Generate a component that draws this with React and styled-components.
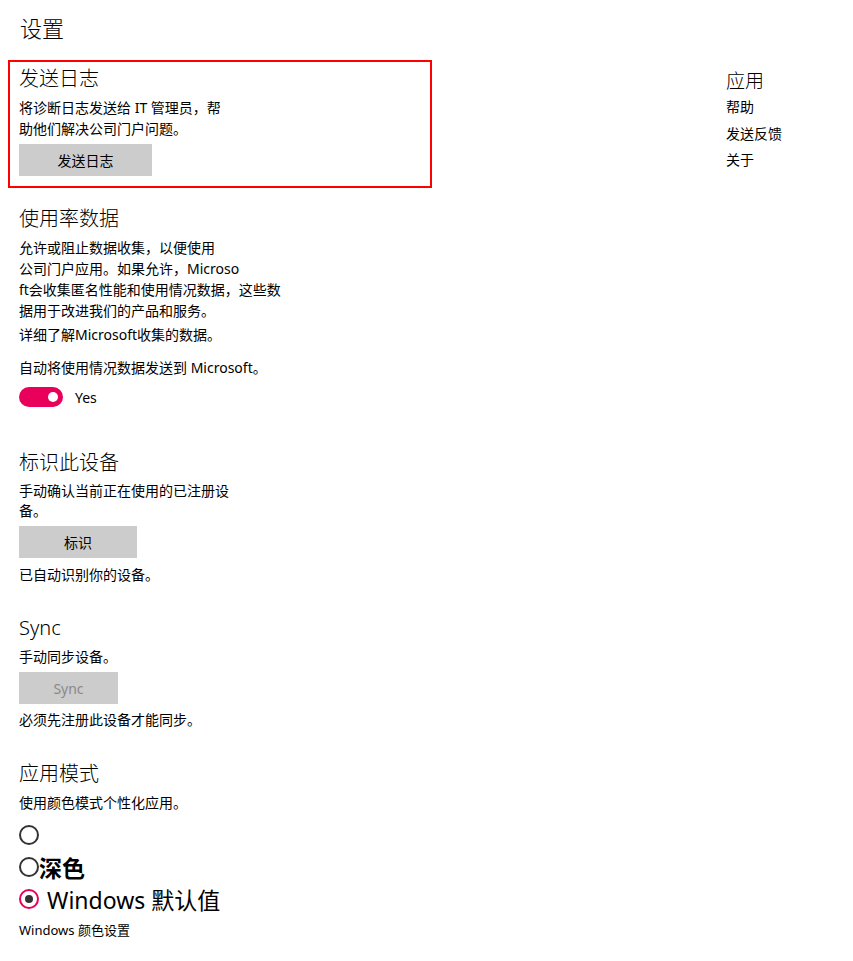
import React, { useState } from "react";
import styled, { createGlobalStyle } from "styled-components";

const GlobalStyle = createGlobalStyle`
  html, body {
    margin: 0;
    padding: 0;
    background: #fff;
  }
  body {
    font-family: "Noto Sans", "Noto Sans CJK SC", sans-serif;
    color: #000;
  }
`;

const Page = styled.div`
  display: grid;
  grid-template-columns: 1fr 127px;
  width: 853px;
  min-height: 961px;
  box-sizing: border-box;
`;

const Main = styled.main`
  padding: 11px 0 20px 8px;
`;

const PageTitle = styled.h1`
  margin: 0 0 15px 12px;
  font-size: 22px;
  line-height: 34px;
  font-weight: 300;
`;

const Section = styled.section`
  width: 424px;
  box-sizing: border-box;
  padding: ${(p) => (p.$highlight ? "3px 9px 10px" : "0 11px")};
  border: ${(p) => (p.$highlight ? "2px solid #f00" : "none")};
  margin-bottom: ${(p) => p.$gap || 0}px;
`;

const Heading = styled.h2`
  margin: 0 0 4px;
  font-size: 20px;
  line-height: 28px;
  font-weight: 300;
`;

const Text = styled.p`
  margin: ${(p) => p.$mt || 0}px 0 0;
  font-size: ${(p) => p.$size || 14}px;
  line-height: ${(p) => p.$lh || 21}px;
  white-space: nowrap;
`;

const Button = styled.button`
  display: flex;
  align-items: center;
  justify-content: center;
  width: ${(p) => p.$w}px;
  height: 32px;
  padding: 0;
  margin: ${(p) => p.$mt ?? 5}px 0 ${(p) => p.$mb ?? 5}px;
  border: none;
  background: #ccc;
  font-family: inherit;
  font-size: 14px;
  color: ${(p) => (p.disabled ? "#8a8a8a" : "#000")};
`;

const ToggleRow = styled.label`
  display: flex;
  align-items: center;
  gap: 12px;
  height: 20px;
  margin-top: 9px;
  font-size: 14px;
`;

const Track = styled.span`
  position: relative;
  width: 44px;
  height: 20px;
  border-radius: 10px;
  background: ${(p) => (p.$on ? "#e8005a" : "#999")};
`;

const Knob = styled.span`
  position: absolute;
  top: 5px;
  left: ${(p) => (p.$on ? "29px" : "5px")};
  width: 10px;
  height: 10px;
  border-radius: 50%;
  background: #fff;
`;

const RadioGroup = styled.div`
  margin-top: 6px;
`;

const RadioRow = styled.label`
  display: flex;
  align-items: center;
  gap: ${(p) => p.$gap || 0}px;
  height: 32px;
  font-size: 23px;
  font-weight: ${(p) => (p.$bold ? 700 : 400)};
`;

const RadioCircle = styled.span`
  position: relative;
  flex: none;
  width: 20px;
  height: 20px;
  box-sizing: border-box;
  border-radius: 50%;
  border: 2px solid ${(p) => (p.$on ? "#e8005a" : "#333")};
  &::after {
    content: "";
    display: ${(p) => (p.$on ? "block" : "none")};
    position: absolute;
    left: 4px;
    top: 4px;
    width: 8px;
    height: 8px;
    border-radius: 50%;
    background: #333;
  }
`;

const Aside = styled.nav`
  padding-top: 68px;
`;

const AsideTitle = styled.h3`
  margin: 0;
  font-size: 19px;
  line-height: 26px;
  font-weight: 300;
`;

const AsideLink = styled.div`
  font-size: 14px;
  line-height: 26.5px;
`;

export default function App() {
  const [on, setOn] = useState(true);
  const [mode, setMode] = useState("default");

  return (
    <>
      <GlobalStyle />
      <Page>
        <Main>
          <PageTitle>设置</PageTitle>

          <Section $highlight $gap={17}>
            <Heading>发送日志</Heading>
            <Text>
              将诊断日志发送给 IT 管理员，帮
              <br />
              助他们解决公司门户问题。
            </Text>
            <Button $w={133} $mb={0}>
              发送日志
            </Button>
          </Section>

          <Section $gap={42}>
            <Heading>使用率数据</Heading>
            <Text>
              允许或阻止数据收集，以便使用
              <br />
              公司门户应用。如果允许，Microso
              <br />
              ft会收集匿名性能和使用情况数据，这些数
              <br />
              据用于改进我们的产品和服务。
            </Text>
            <Text $mt={3}>详细了解Microsoft收集的数据。</Text>
            <Text $mt={12}>自动将使用情况数据发送到 Microsoft。</Text>
            <ToggleRow onClick={() => setOn(!on)}>
              <Track $on={on}>
                <Knob $on={on} />
              </Track>
              Yes
            </ToggleRow>
          </Section>

          <Section $gap={29}>
            <Heading>标识此设备</Heading>
            <Text $lh={20}>
              手动确认当前正在使用的已注册设
              <br />
              备。
            </Text>
            <Button $w={118} $mt={5} $mb={6}>
              标识
            </Button>
            <Text>已自动识别你的设备。</Text>
          </Section>

          <Section $gap={30}>
            <Heading>Sync</Heading>
            <Text>手动同步设备。</Text>
            <Button $w={99} disabled>
              Sync
            </Button>
            <Text>必须先注册此设备才能同步。</Text>
          </Section>

          <Section>
            <Heading>应用模式</Heading>
            <Text>使用颜色模式个性化应用。</Text>
            <RadioGroup>
              <RadioRow onClick={() => setMode("light")}>
                <RadioCircle $on={mode === "light"} />
              </RadioRow>
              <RadioRow $bold onClick={() => setMode("dark")}>
                <RadioCircle $on={mode === "dark"} />
                深色
              </RadioRow>
              <RadioRow $gap={8} onClick={() => setMode("default")}>
                <RadioCircle $on={mode === "default"} />
                Windows 默认值
              </RadioRow>
            </RadioGroup>
            <Text $mt={5} $size={13}>
              Windows 颜色设置
            </Text>
          </Section>
        </Main>

        <Aside>
          <AsideTitle>应用</AsideTitle>
          <AsideLink>帮助</AsideLink>
          <AsideLink>发送反馈</AsideLink>
          <AsideLink>关于</AsideLink>
        </Aside>
      </Page>
    </>
  );
}
